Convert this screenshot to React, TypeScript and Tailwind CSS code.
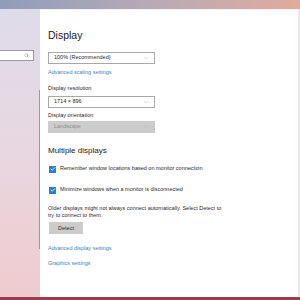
import { Search, ChevronDown, Check } from 'lucide-react';

function Dropdown({ value, disabled = false }: { value: string; disabled?: boolean }) {
  return (
    <div
      className={`w-[107px] h-[12px] flex items-center justify-between px-[5px] border ${
        disabled ? 'bg-[#cccccc] border-[#cccccc] text-[#8f8f8f]' : 'bg-white border-[#a8a8a8] text-[#2a2a2a]'
      }`}
    >
      <span className="text-[5.5px] leading-none">{value}</span>
      <ChevronDown size={6} strokeWidth={1.5} className={disabled ? 'text-[#a0a0a0]' : 'text-[#888]'} />
    </div>
  );
}

function CheckRow({ label, className = '' }: { label: string; className?: string }) {
  return (
    <div className={`flex items-center gap-[4px] h-[8px] ${className}`}>
      <div className="w-[7px] h-[7px] ml-[1px] bg-[#2b7fcb] flex items-center justify-center">
        <Check size={6} strokeWidth={3} className="text-white" />
      </div>
      <span className="text-[5.5px] leading-none text-[#2a2a2a]">{label}</span>
    </div>
  );
}

export default function App() {
  return (
    <div
      className="w-[300px] h-[300px] flex flex-col overflow-hidden"
      style={{ fontFamily: '"Liberation Sans", Arial, sans-serif' }}
    >
      <div className="h-[9px] bg-gradient-to-r from-[#8e9dba] via-[#b8a9b6] to-[#e0ab9c]" />
      <div className="flex-1 flex">
        <aside className="w-[40px] flex bg-gradient-to-b from-[#dedcea] via-[#e8d7e0] to-[#efcbcf]">
          <div className="flex-1 pt-[41px]">
            <div className="h-[11px] w-[34px] bg-white border border-[#9a9aa5] border-l-0 flex items-center justify-end pr-[4px]">
              <Search size={5} strokeWidth={1.5} className="text-[#666]" />
            </div>
          </div>
          <div className="w-px">
            <div className="mt-[81px] h-[159px] bg-[#9d98a0]" />
          </div>
        </aside>
        <main className="flex-1 bg-white flex flex-col pl-[8px] border-t border-[#f3f3f3]">
          <h1 className="mt-[18px] h-[14px] leading-[14px] text-[10.5px] font-light text-[#1a1a1a]">Display</h1>
          <div className="mt-[10px]">
            <Dropdown value="100% (Recommended)" />
          </div>
          <div className="mt-[4px] h-[8px] leading-[8px] text-[5.5px] text-[#3a84c2]">Advanced scaling settings</div>
          <div className="mt-[8px] h-[8px] leading-[8px] text-[5.5px] text-[#2a2a2a]">Display resolution</div>
          <div className="mt-[4px]">
            <Dropdown value="1714 × 896" />
          </div>
          <div className="mt-[3px] h-[8px] leading-[8px] text-[5.5px] text-[#2a2a2a]">Display orientation</div>
          <div className="mt-[2px]">
            <Dropdown value="Landscape" disabled />
          </div>
          <h2 className="mt-[12px] h-[12px] leading-[12px] text-[8px] text-[#1a1a1a]">Multiple displays</h2>
          <CheckRow className="mt-[8px]" label="Remember window locations based on monitor connection" />
          <CheckRow className="mt-[13px]" label="Minimize windows when a monitor is disconnected" />
          <p className="mt-[11px] text-[5.5px] leading-[7px] text-[#2a2a2a] w-[177px]">
            Older displays might not always connect automatically. Select Detect to try to connect to them.
          </p>
          <button className="mt-[3px] ml-[1px] w-[34px] h-[12px] bg-[#cccccc] text-[5.5px] text-[#2a2a2a] flex items-center justify-center">
            Detect
          </button>
          <div className="mt-[10px] h-[8px] leading-[8px] text-[5.5px] text-[#3a84c2]">Advanced display settings</div>
          <div className="mt-[7px] h-[8px] leading-[8px] text-[5.5px] text-[#3a84c2]">Graphics settings</div>
        </main>
        <div className="w-[2px] bg-[#f1e6e8]" />
      </div>
      <div className="h-[3px] bg-[#9e3a4a]" />
    </div>
  );
}
